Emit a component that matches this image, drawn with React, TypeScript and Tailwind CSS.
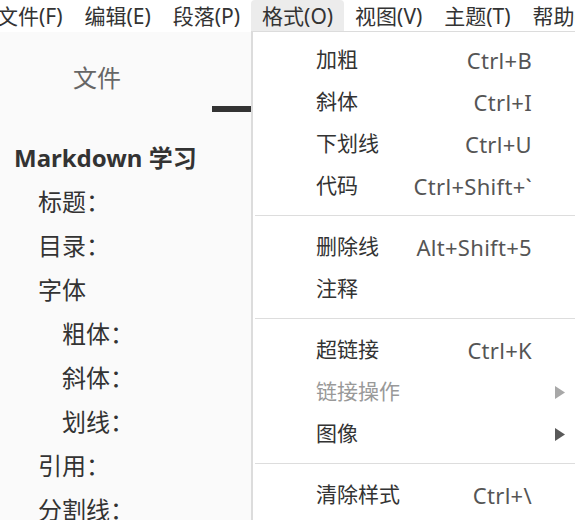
import React from "react";

const menuBar = [
  { label: "文件(F)" },
  { label: "编辑(E)" },
  { label: "段落(P)" },
  { label: "格式(O)", active: true },
  { label: "视图(V)" },
  { label: "主题(T)" },
  { label: "帮助(H)" },
];

type Item =
  | { sep: true }
  | { sep?: false; label: string; shortcut?: string; sub?: boolean; disabled?: boolean };

const items: Item[] = [
  { label: "加粗", shortcut: "Ctrl+B" },
  { label: "斜体", shortcut: "Ctrl+I" },
  { label: "下划线", shortcut: "Ctrl+U" },
  { label: "代码", shortcut: "Ctrl+Shift+`" },
  { sep: true },
  { label: "删除线", shortcut: "Alt+Shift+5" },
  { label: "注释" },
  { sep: true },
  { label: "超链接", shortcut: "Ctrl+K" },
  { label: "链接操作", sub: true, disabled: true },
  { label: "图像", sub: true },
  { sep: true },
  { label: "清除样式", shortcut: "Ctrl+\\" },
];

const outline = [
  { t: "标题：", l: 1 },
  { t: "目录：", l: 1 },
  { t: "字体", l: 1 },
  { t: "粗体：", l: 2 },
  { t: "斜体：", l: 2 },
  { t: "划线：", l: 2 },
  { t: "引用：", l: 1 },
  { t: "分割线：", l: 1 },
];

function Arrow({ disabled }: { disabled?: boolean }) {
  return (
    <svg width="10" height="13" viewBox="0 0 10 13">
      <polygon points="0,0 10,6.5 0,13" fill={disabled ? "#a8a8a8" : "#5a5a5a"} />
    </svg>
  );
}

export default function App() {
  return (
    <div className="relative w-[575px] h-[520px] overflow-hidden bg-white font-['Noto_Sans','Noto_Sans_CJK_SC',sans-serif] text-[#333]">
      <div className="flex h-[32px] bg-white ml-[-14px] text-[21px] leading-none whitespace-nowrap">
        {menuBar.map((m) => (
          <div
            key={m.label}
            className={
              m.active
                ? "shrink-0 flex items-center px-[11px] bg-[#ececec] rounded-t-[4px]"
                : "shrink-0 flex items-center px-[11px]"
            }
          >
            {m.label}
          </div>
        ))}
      </div>
      <div className="flex h-[488px] overflow-hidden">
        <aside className="w-[290px] shrink-0 bg-[#fafafa] flex flex-col">
          <div className="h-[80px] shrink-0 flex items-end">
            <div className="w-[194px] text-center text-[24px] leading-[32px] text-[#666] pb-[18px]">文件</div>
            <div className="flex-1 flex flex-col items-stretch">
              <div className="h-[6px] bg-[#333] ml-[18px] mr-[18px]" />
            </div>
          </div>
          <div className="pt-[24px] shrink-0">
            <div className="h-[44px] flex items-center pl-[14px] text-[24px] font-bold">Markdown 学习</div>
            {outline.map((o) => (
              <div
                key={o.t}
                className={
                  o.l === 1
                    ? "h-[44px] flex items-center pl-[38px] text-[24px]"
                    : "h-[44px] flex items-center pl-[62px] text-[24px]"
                }
              >
                {o.t}
              </div>
            ))}
          </div>
        </aside>
        <main className="flex-1 bg-white" />
      </div>
      <div className="absolute left-[251px] top-[31px] w-[324px] h-[489px] bg-white border-l-2 border-t border-[#dcdcdc] pt-[7px] text-[21px]">
        {items.map((it, i) =>
          it.sep ? (
            <div key={i} className="ml-[2px] mt-[8px] mb-[10px] h-px bg-[#dddddd]" />
          ) : (
            <div key={i} className="h-[42px] flex items-center pl-[63px] pr-[10px] whitespace-nowrap">
              <span className={it.disabled ? "flex-1 text-[#999]" : "flex-1 text-[#333]"}>{it.label}</span>
              <span className="text-[#555] text-[22px] tracking-[0.3px]">{it.shortcut}</span>
              <span className="w-[33px] flex justify-end">{it.sub ? <Arrow disabled={it.disabled} /> : null}</span>
            </div>
          )
        )}
      </div>
    </div>
  );
}
